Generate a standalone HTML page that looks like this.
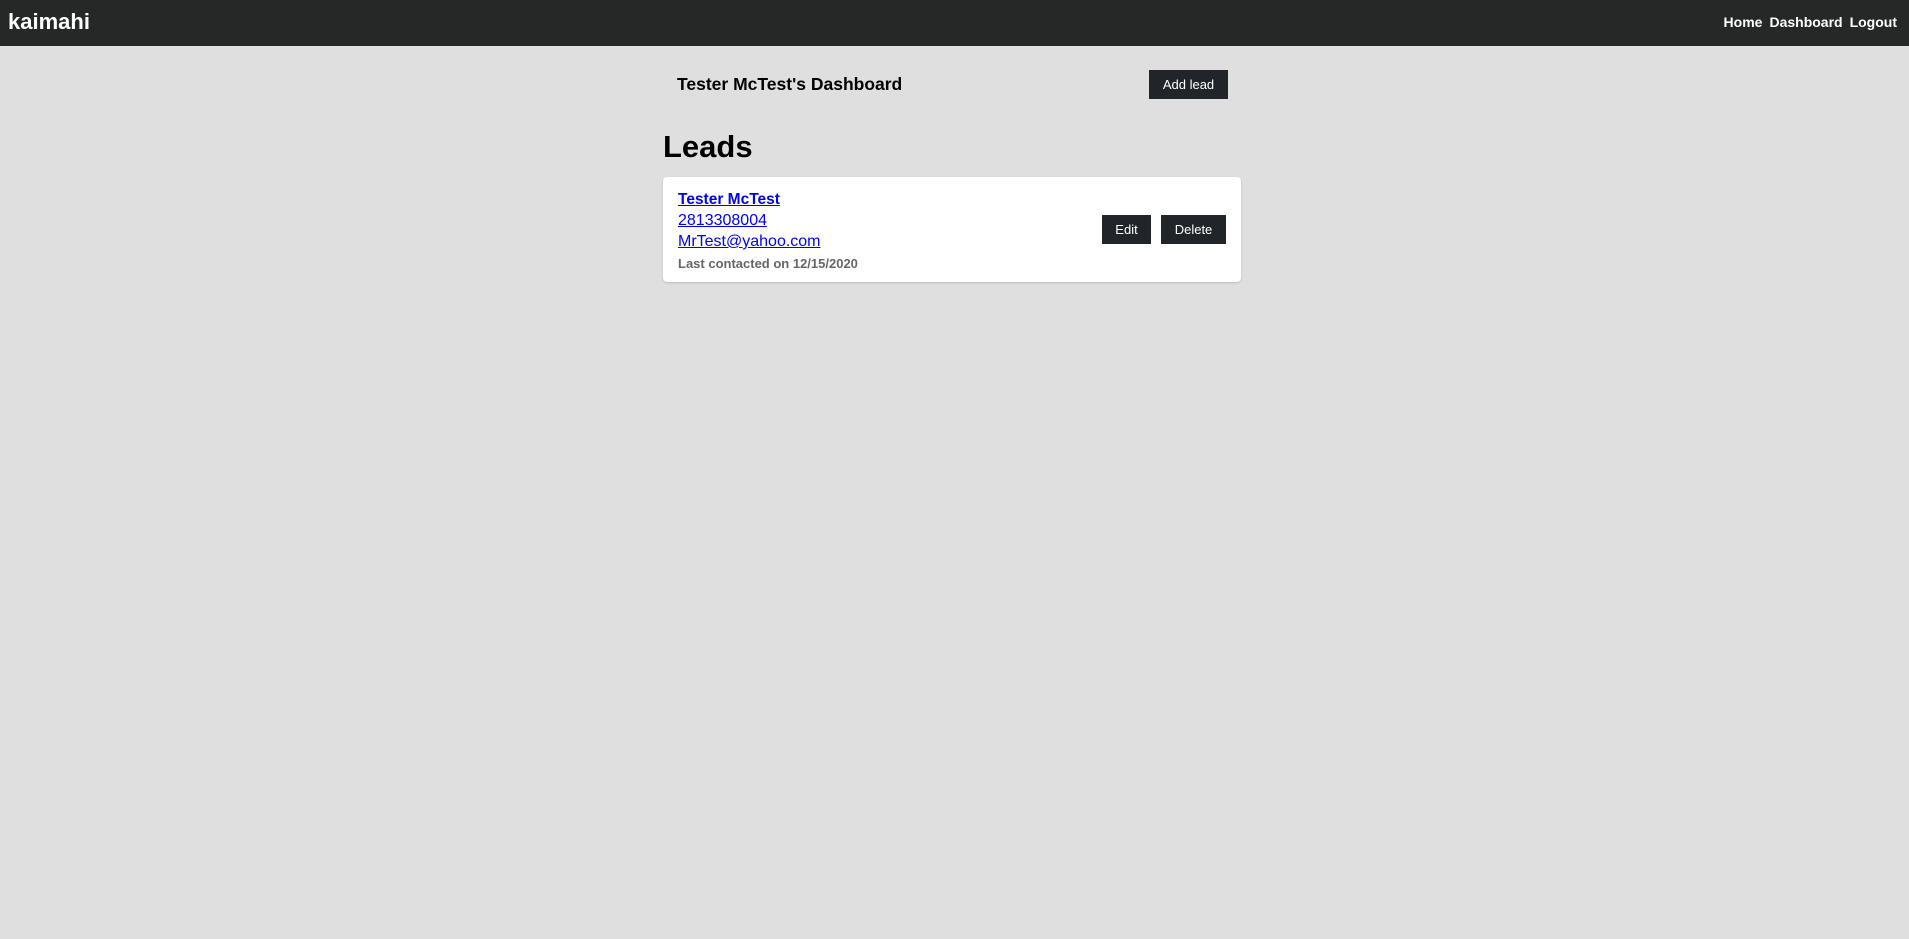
<!DOCTYPE html>
<html><head><style>
*{margin:0;padding:0;box-sizing:border-box}
body{width:1909px;height:939px;background:#dfdfdf;font-family:"Liberation Sans",sans-serif;position:relative;overflow:hidden}
.nav{position:absolute;left:0;top:0;width:1909px;height:46px;background:#262727}
.logo{position:absolute;left:8px;top:8px;font-size:22px;font-weight:bold;color:#fff;line-height:28px}
.links{position:absolute;right:12px;top:13px;font-size:14px;font-weight:bold;color:#fff;line-height:18px;word-spacing:0}
.links span{margin-left:7px}
.title{position:absolute;left:677px;top:73px;font-size:17.5px;font-weight:bold;line-height:22px}
.btn{position:absolute;background:#212529;color:#fff;font-size:13px;display:flex;align-items:center;justify-content:center}
h1{position:absolute;left:663px;top:127px;font-size:31px;line-height:40px}
.card{position:absolute;left:663px;top:177px;width:578px;height:105px;background:#fff;border-radius:4px;box-shadow:0 1px 2px rgba(0,0,0,.15)}
.card a{position:absolute;left:15px;color:#00e;text-decoration:underline;font-size:16px;line-height:20px}
.last{position:absolute;left:15px;top:79px;font-size:13px;font-weight:bold;color:#666}
</style></head><body>
<div class="nav"><div class="logo">kaimahi</div><div class="links"><span>Home</span><span>Dashboard</span><span>Logout</span></div></div>
<div class="title">Tester McTest's Dashboard</div>
<div class="btn" style="left:1149px;top:70px;width:79px;height:29px">Add lead</div>
<h1>Leads</h1>
<div class="card">
<a style="top:13px;font-weight:bold;font-size:15.5px">Tester McTest</a>
<a style="top:34px">2813308004</a>
<a style="top:55px">MrTest@yahoo.com</a>
<div class="last">Last contacted on 12/15/2020</div>
<div class="btn" style="left:439px;top:38px;width:49px;height:29px">Edit</div>
<div class="btn" style="left:498px;top:38px;width:65px;height:29px">Delete</div>
</div>
</body></html>
